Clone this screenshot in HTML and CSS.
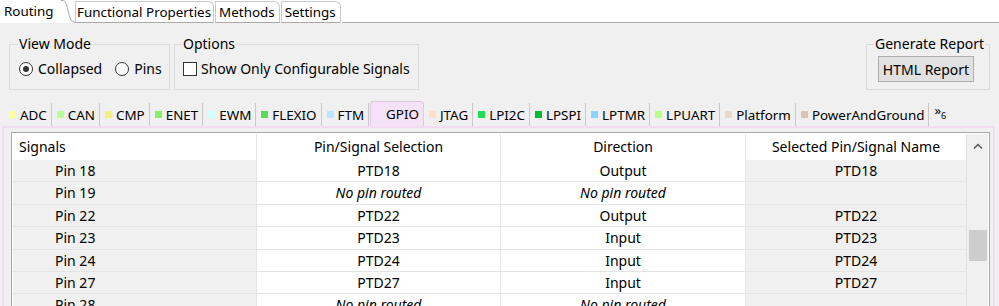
FILE: index.html
```html
<!DOCTYPE html>
<html>
<head>
    <title>Routing</title>
    <link rel="stylesheet" href="styles.css">
</head>
<body>
    <div class="main-tabs">
        <div class="mtab active">Routing</div>
        <svg class="curve" width="14" height="23" viewBox="0 0 14 23">
            <path d="M0 0.5 H2 C8 0.5 6 22.5 14 22.5" fill="none" stroke="#a9a9a9"/>
        </svg>
        <div class="mtab">Functional Properties</div>
        <div class="mtab wide">Methods</div>
        <div class="mtab wide">Settings</div>
        <div class="mtab-fill"></div>
    </div>

    <div class="options-row">
        <fieldset class="group view-mode">
            <legend>View Mode</legend>
            <label class="radio"><span class="radio-dot checked"></span>Collapsed</label>
            <label class="radio"><span class="radio-dot"></span>Pins</label>
        </fieldset>
        <fieldset class="group options">
            <legend>Options</legend>
            <label class="check"><span class="check-box"></span>Show Only Configurable Signals</label>
        </fieldset>
        <fieldset class="group report">
            <legend>Generate Report</legend>
            <button class="btn">HTML Report</button>
        </fieldset>
    </div>

    <div class="periph-tabs">
        <div class="ptab"><span class="swatch" style="background:#ffff99"></span>ADC</div>
        <div class="ptab"><span class="swatch" style="background:#b8ff99"></span>CAN</div>
        <div class="ptab"><span class="swatch" style="background:#f0f07a"></span>CMP</div>
        <div class="ptab"><span class="swatch" style="background:#88ee66"></span>ENET</div>
        <div class="ptab"><span class="swatch" style="background:#d4ffff"></span>EWM</div>
        <div class="ptab"><span class="swatch" style="background:#55dd55"></span>FLEXIO</div>
        <div class="ptab"><span class="swatch" style="background:#b8e8ff"></span>FTM</div>
        <div class="ptab selected"><span class="swatch" style="background:#f6e2f6"></span>GPIO</div>
        <div class="ptab"><span class="swatch" style="background:#ffe0c4"></span>JTAG</div>
        <div class="ptab"><span class="swatch" style="background:#22dd55"></span>LPI2C</div>
        <div class="ptab"><span class="swatch" style="background:#00bb33"></span>LPSPI</div>
        <div class="ptab"><span class="swatch" style="background:#88d4ff"></span>LPTMR</div>
        <div class="ptab"><span class="swatch" style="background:#b8ff88"></span>LPUART</div>
        <div class="ptab"><span class="swatch" style="background:#ecd8c8"></span>Platform</div>
        <div class="ptab"><span class="swatch" style="background:#dcc4b4"></span>PowerAndGround</div>
        <div class="more">&raquo;<sub>6</sub></div>
    </div>

    <div class="tab-content">
        <div class="table-box">
            <div class="grid">
                <div class="th left">Signals</div>
                <div class="th">Pin/Signal Selection</div>
                <div class="th">Direction</div>
                <div class="th">Selected Pin/Signal Name</div>

                <div class="td sig">Pin 18</div>
                <div class="td">PTD18</div>
                <div class="td">Output</div>
                <div class="td name">PTD18</div>

                <div class="td sig">Pin 19</div>
                <div class="td none">No pin routed</div>
                <div class="td none">No pin routed</div>
                <div class="td name"></div>

                <div class="td sig">Pin 22</div>
                <div class="td">PTD22</div>
                <div class="td">Output</div>
                <div class="td name">PTD22</div>

                <div class="td sig">Pin 23</div>
                <div class="td">PTD23</div>
                <div class="td">Input</div>
                <div class="td name">PTD23</div>

                <div class="td sig">Pin 24</div>
                <div class="td">PTD24</div>
                <div class="td">Input</div>
                <div class="td name">PTD24</div>

                <div class="td sig">Pin 27</div>
                <div class="td">PTD27</div>
                <div class="td">Input</div>
                <div class="td name">PTD27</div>

                <div class="td sig">Pin 28</div>
                <div class="td none">No pin routed</div>
                <div class="td none">No pin routed</div>
                <div class="td name"></div>
            </div>
            <div class="scrollbar">
                <svg class="arrow" width="10" height="6" viewBox="0 0 10 6">
                    <path d="M1 5.5 L5 1.5 L9 5.5" fill="none" stroke="#555" stroke-width="1.5"/>
                </svg>
                <div class="thumb"></div>
            </div>
        </div>
    </div>
</body>
</html>
```

FILE: styles.css
```css
body {
    margin: 0;
    background-color: #f0f0f0;
    font-family: "Noto Sans", "Open Sans", sans-serif;
    font-size: 14px;
    color: #000;
    height: 306px;
    overflow: hidden;
}

/* top editor tabs */
.main-tabs {
    display: flex;
    align-items: flex-end;
    height: 23px;
    background: #fff;
    font-size: 13.4px;
}

.mtab {
    height: 22px;
    line-height: 20px;
    padding: 0 2px 0 1px;
    border: 1px solid #c9c9c9;
    border-bottom: 1px solid #a9a9a9;
    border-top-right-radius: 6px;
    background: #fff;
    margin-right: 1px;
    box-sizing: border-box;
}

.mtab.wide {
    padding: 0 4px 0 3px;
}

.mtab.active {
    border: none;
    padding: 0 0 0 4px;
    width: 61px;
    height: 23px;
    line-height: 23px;
    margin-right: 0;
}

.curve {
    display: block;
    flex: none;
}

.mtab-fill {
    flex: 1;
    height: 1px;
    background: #a9a9a9;
}

/* group boxes */
.options-row {
    display: flex;
    align-items: flex-start;
    padding: 13px 9px 0 9px;
    height: 64px;
}

.group {
    margin: 0;
    padding: 0 8px;
    border: 1px solid #dadada;
    height: 54px;
    min-width: 0;
    box-sizing: border-box;
}

.group legend {
    padding: 0 1px;
    margin-left: -1px;
    line-height: 16px;
    white-space: nowrap;
}

.view-mode {
    width: 161px;
    margin-right: 4px;
    display: flex;
    align-items: center;
    gap: 13px;
    padding-left: 9px;
}

.options {
    width: 245px;
    display: flex;
    align-items: center;
}

.report {
    margin-left: auto;
    width: 124px;
    padding: 0 2px 0 8px;
}

.radio, .check {
    display: flex;
    align-items: center;
    margin-top: -4px;
}

.radio-dot {
    width: 14px;
    height: 14px;
    border: 1px solid #333;
    border-radius: 50%;
    background: #fff;
    margin-right: 5px;
    box-sizing: border-box;
    position: relative;
}

.radio-dot.checked::after {
    content: "";
    position: absolute;
    left: 3px;
    top: 3px;
    width: 6px;
    height: 6px;
    border-radius: 50%;
    background: #333;
}

.check-box {
    width: 14px;
    height: 14px;
    border: 1px solid #333;
    background: #fff;
    margin-right: 4px;
    box-sizing: border-box;
}

.btn {
    display: block;
    font-family: inherit;
    font-size: 14px;
    background: #e1e1e1;
    border: 1px solid #adadad;
    width: 96px;
    height: 26px;
    padding: 0;
    margin: 4px 0 0 3px;
}

/* peripheral tabs */
.periph-tabs {
    display: flex;
    align-items: flex-end;
    height: 26px;
    padding-left: 5px;
    font-size: 13.4px;
}

.ptab {
    display: flex;
    align-items: center;
    height: 23px;
    padding: 0 4px 0 4px;
    border-right: 1px solid #c8c8c8;
    margin-right: 1px;
    box-sizing: border-box;
}

.ptab .swatch {
    width: 7px;
    height: 7px;
    margin-right: 4px;
}

.ptab.selected {
    background: #f6e2f6;
    border: 1px solid #e4c4e4;
    border-bottom: none;
    border-radius: 4px 4px 0 0;
    height: 25px;
    padding-left: 4px;
    padding-right: 4px;
}

.more {
    padding-left: 4px;
    font-size: 13px;
    line-height: 16px;
    align-self: center;
}

.more sub {
    font-size: 9px;
}

/* table area */
.tab-content {
    margin: 0 4px 0 2px;
    border: 2px solid #f3dcf3;
    border-bottom: none;
    padding: 4px 3px 0 7px;
    height: 200px;
}

.table-box {
    display: flex;
    border: 1px solid #a8a8a8;
    padding: 1px 0 0 1px;
    background: #fff;
    height: 200px;
}

.grid {
    display: grid;
    grid-template-columns: 244px 244px 245px 221px;
    grid-template-rows: 26px;
    grid-auto-rows: 22.4px;
    align-content: start;
}

.th {
    background: #fff;
    text-align: center;
    line-height: 26px;
    border-right: 1px solid #e4e4e4;
}

.th.left {
    text-align: left;
    padding-left: 6px;
}

.td {
    text-align: center;
    line-height: 21px;
    border-bottom: 1px solid #e4e4e4;
    border-right: 1px solid #e4e4e4;
    background: #fff;
}

.td.sig {
    text-align: left;
    padding-left: 42px;
    background: #f0f0f0;
}

.td.name {
    background: #f0f0f0;
}

.td.none {
    font-style: italic;
}

.scrollbar {
    width: 21px;
    background: #f0f0f0;
    display: flex;
    flex-direction: column;
    align-items: center;
}

.arrow {
    margin-top: 9px;
    margin-left: 1px;
}

.thumb {
    width: 18px;
    height: 31px;
    background: #cdcdcd;
    margin-top: 81px;
}
```
